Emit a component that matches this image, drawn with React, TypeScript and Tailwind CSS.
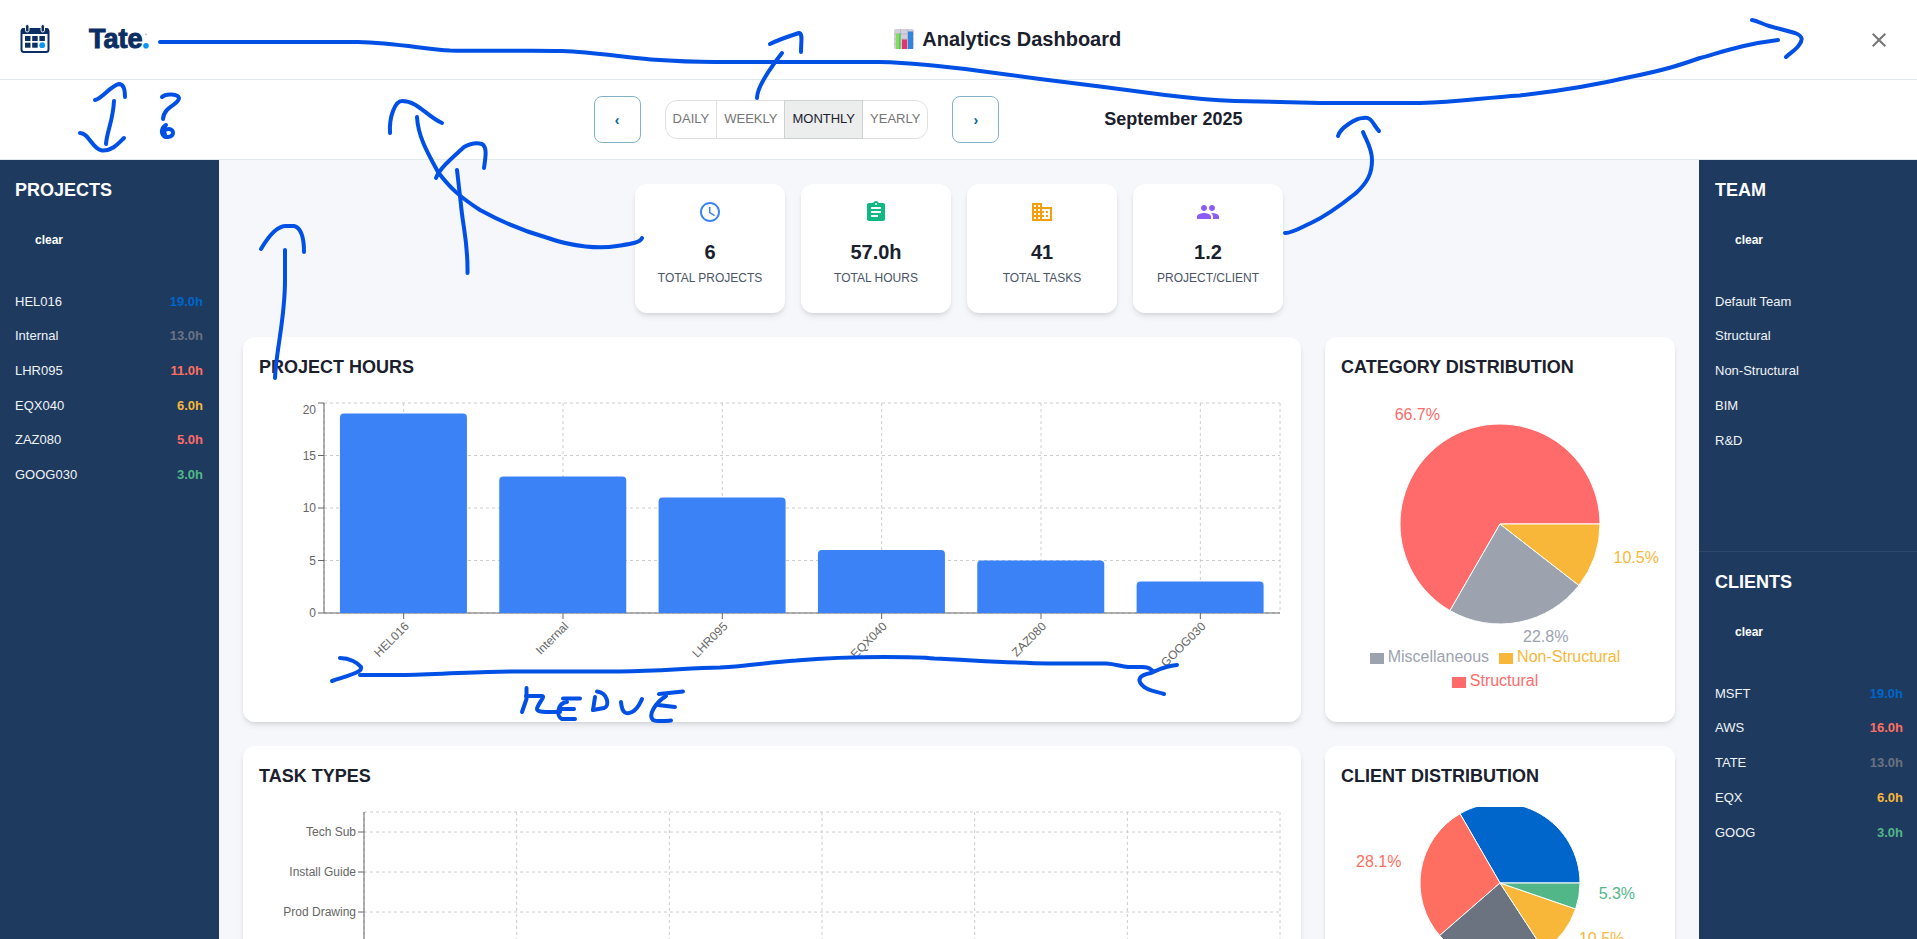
import React from "react";
import { MdAccessTime, MdAssignment, MdBusiness, MdClose, MdPeople } from "react-icons/md";

type Entry = { name: string; hours?: string; tone?: string };

const projects: Entry[] = [
  { name: "HEL016", hours: "19.0h", tone: "text-[#0066cc]" },
  { name: "Internal", hours: "13.0h", tone: "text-[#6b7280]" },
  { name: "LHR095", hours: "11.0h", tone: "text-[#ff6f61]" },
  { name: "EQX040", hours: "6.0h", tone: "text-[#f8b739]" },
  { name: "ZAZ080", hours: "5.0h", tone: "text-[#ff6b6b]" },
  { name: "GOOG030", hours: "3.0h", tone: "text-[#52b788]" },
];

const teams: Entry[] = [
  { name: "Default Team" },
  { name: "Structural" },
  { name: "Non-Structural" },
  { name: "BIM" },
  { name: "R&D" },
];

const clients: Entry[] = [
  { name: "MSFT", hours: "19.0h", tone: "text-[#0066cc]" },
  { name: "AWS", hours: "16.0h", tone: "text-[#ff6f61]" },
  { name: "TATE", hours: "13.0h", tone: "text-[#6b7280]" },
  { name: "EQX", hours: "6.0h", tone: "text-[#f8b739]" },
  { name: "GOOG", hours: "3.0h", tone: "text-[#52b788]" },
];

const stats = [
  { icon: MdAccessTime, tone: "text-[#3b82f6]", value: "6", label: "TOTAL PROJECTS" },
  { icon: MdAssignment, tone: "text-[#10b981]", value: "57.0h", label: "TOTAL HOURS" },
  { icon: MdBusiness, tone: "text-[#f59e0b]", value: "41", label: "TOTAL TASKS" },
  { icon: MdPeople, tone: "text-[#8b5cf6]", value: "1.2", label: "PROJECT/CLIENT" },
];

const projectHours = [
  { name: "HEL016", value: 19 },
  { name: "Internal", value: 13 },
  { name: "LHR095", value: 11 },
  { name: "EQX040", value: 6 },
  { name: "ZAZ080", value: 5 },
  { name: "GOOG030", value: 3 },
];

const periods = ["DAILY", "WEEKLY", "MONTHLY", "YEARLY"];

function CalendarIcon() {
  return (
    <svg width="30" height="30" viewBox="0 0 30 30" aria-hidden="true">
      <rect x="1.5" y="5" width="27" height="23" rx="2.5" fill="#fff" stroke="#0b2e63" strokeWidth="2" />
      <path d="M1 10V6.5A2.5 2.5 0 0 1 3.500 4H26.500A2.500 2.500 0 0 1 29 6.500V10Z" fill="#0b2e63" />
      <rect x="5.500" y="0.500" width="3.500" height="7.500" rx="1.700" fill="#0b2e63" stroke="#fff" strokeWidth="1" />
      <rect x="21" y="0.500" width="3.500" height="7.500" rx="1.700" fill="#0b2e63" stroke="#fff" strokeWidth="1" />
      <g fill="#0b2e63">
        <rect x="5" y="12" width="5.500" height="5" />
        <rect x="12.200" y="12" width="5.500" height="5" />
        <rect x="19.400" y="12" width="5.500" height="5" />
        <rect x="5" y="18.700" width="5.500" height="5" />
        <rect x="12.200" y="18.700" width="5.500" height="5" />
      </g>
      <circle cx="22.200" cy="21.200" r="2.900" fill="#0a96f5" />
    </svg>
  );
}

function TateLogo() {
  return (
    <div className="flex items-end text-[27px] leading-8 font-bold text-[#0b2e63]">
      <span className="[-webkit-text-stroke:1px]">Tate</span>
      <svg width="6" height="32" viewBox="0 0 6 32" aria-hidden="true">
        <circle cx="3" cy="11.500" r="1" fill="#b9c3d3" />
        <circle cx="3" cy="22.800" r="2.800" fill="#0a96f5" />
      </svg>
    </div>
  );
}

function ChartGlyph() {
  return (
    <svg width="20" height="20" viewBox="0 0 20 20" aria-hidden="true">
      <rect width="20" height="20" rx="1.500" fill="#d3cedb" />
      <path d="M0 5H20M0 10H20M0 15H20M6.500 0V20M13.500 0V20" stroke="#b5aec2" strokeWidth="0.800" />
      <rect x="2" y="4.500" width="4.500" height="15.500" fill="#86dc5a" />
      <rect x="5" y="4.500" width="1.500" height="15.500" fill="#5fc26a" />
      <rect x="8" y="10.500" width="5" height="9.500" fill="#e0356f" />
      <rect x="14" y="2.500" width="5" height="17.500" fill="#2f86dc" />
    </svg>
  );
}

function SideSection({ title, rows, gridClass, className }: { title: string; rows: Entry[]; gridClass: string; className: string }) {
  return (
    <section className={className}>
      <h2 className="text-lg leading-7 font-bold text-white">{title}</h2>
      <button type="button" className="mt-5 flex h-8 w-[68px] items-center justify-center text-xs font-bold text-white">
        clear
      </button>
      <ul className={gridClass}>
        {rows.map((row) => (
          <li key={row.name} className="flex items-center justify-between text-[13px] text-[#f1f4f8]">
            <span>{row.name}</span>
            {row.hours && <span className={`font-bold ${row.tone}`}>{row.hours}</span>}
          </li>
        ))}
      </ul>
    </section>
  );
}

function Card({ title, children }: { title: string; children: React.ReactNode }) {
  return (
    <section className="min-w-0 rounded-xl bg-white p-4 shadow-md">
      <h2 className="mb-4 text-lg leading-[29px] font-bold text-[#1a202c]">{title}</h2>
      {children}
    </section>
  );
}

function ProjectHoursChart() {
  const left = 65;
  const right = 1021;
  const top = 5;
  const bottom = 215;
  const band = (right - left) / projectHours.length;
  const yOf = (v: number) => bottom - ((bottom - top) * v) / 20;
  const centers = projectHours.map((_, i) => left + band * (i + 0.5));
  return (
    <svg viewBox="0 0 1026 308" className="block h-auto w-full" role="img" aria-label="Project hours">
      <g stroke="#ccc" strokeDasharray="3 3">
        {[0, 5, 10, 15, 20].map((v) => (
          <line key={v} x1={left} x2={right} y1={yOf(v)} y2={yOf(v)} />
        ))}
        {[left, ...centers, right].map((x) => (
          <line key={x} x1={x} x2={x} y1={top} y2={bottom} />
        ))}
      </g>
      <g stroke="#666">
        <line x1={left} x2={right} y1={bottom} y2={bottom} />
        <line x1={left} x2={left} y1={top} y2={bottom} />
        {[0, 5, 10, 15, 20].map((v) => (
          <line key={v} x1={left - 6} x2={left} y1={yOf(v)} y2={yOf(v)} />
        ))}
        {centers.map((x) => (
          <line key={x} x1={x} x2={x} y1={bottom} y2={bottom + 6} />
        ))}
      </g>
      {projectHours.map((d, i) => {
        const x = left + band * (i + 0.1);
        const w = Math.floor(band * 0.8);
        const y = yOf(d.value);
        return (
          <path
            key={d.name}
            fill="#3b82f6"
            d={`M${x},${bottom}V${y + 4}Q${x},${y} ${x + 4},${y}H${x + w - 4}Q${x + w},${y} ${x + w},${y + 4}V${bottom}Z`}
          />
        );
      })}
      <g fill="#666" fontSize="12" textAnchor="end">
        {[0, 5, 10, 15, 20].map((v) => (
          <text key={v} x={left - 8} y={Math.max(yOf(v), 12)} dy="0.355em">
            {v}
          </text>
        ))}
        {projectHours.map((d, i) => (
          <text key={d.name} x={centers[i]} y={bottom + 8} dy="0.71em" transform={`rotate(-45 ${centers[i]} ${bottom + 8})`}>
            {d.name}
          </text>
        ))}
      </g>
    </svg>
  );
}

function TaskTypesChart() {
  const left = 105;
  const right = 1021;
  const rows = ["Tech Sub", "Install Guide", "Prod Drawing"];
  return (
    <svg viewBox="0 0 1026 308" className="block h-auto w-full" role="img" aria-label="Task types">
      <g stroke="#ccc" strokeDasharray="3 3">
        {[5, 25, 65, 105, 145, 185].map((y) => (
          <line key={y} x1={left} x2={right} y1={y} y2={y} />
        ))}
        {[0, 1, 2, 3, 4, 5, 6].map((i) => {
          const x = left + ((right - left) / 6) * i;
          return <line key={i} x1={x} x2={x} y1={5} y2={205} />;
        })}
      </g>
      <g stroke="#666">
        <line x1={left} x2={left} y1={5} y2={205} />
        {rows.map((r, i) => (
          <line key={r} x1={left - 6} x2={left} y1={25 + 40 * i} y2={25 + 40 * i} />
        ))}
      </g>
      <g fill="#666" fontSize="12" textAnchor="end">
        {rows.map((r, i) => (
          <text key={r} x={left - 8} y={25 + 40 * i} dy="0.355em">
            {r}
          </text>
        ))}
      </g>
    </svg>
  );
}

type Slice = { value: number; color: string; label?: string };

function Pie({ slices, cy, radius, height, title }: { slices: Slice[]; cy: number; radius: number; height: number; title: string }) {
  const cx = 159;
  const total = slices.reduce((sum, s) => sum + s.value, 0);
  const point = (turn: number, r: number) => {
    const a = turn * Math.PI * 2;
    return [cx + r * Math.cos(a), cy - r * Math.sin(a)];
  };
  let run = 0;
  const arcs = slices.map((s) => {
    const from = run / total;
    run += s.value;
    const to = run / total;
    return { ...s, a: point(from, radius), b: point(to, radius), mid: (from + to) / 2, big: to - from > 0.5 ? 1 : 0 };
  });
  return (
    <svg viewBox={`0 0 318 ${height}`} className="block h-auto w-full overflow-hidden" role="img" aria-label={title}>
      {arcs.map((s) => (
        <path
          key={s.color}
          fill={s.color}
          stroke="#fff"
          d={`M${cx},${cy}L${s.a[0]},${s.a[1]}A${radius},${radius} 0 ${s.big} 0 ${s.b[0]},${s.b[1]}Z`}
        />
      ))}
      {arcs.map((s) => {
        if (!s.label) return null;
        const [x, y] = point(s.mid, radius + 20);
        return (
          <text key={s.color} x={x} y={y} fill={s.color} fontSize="16" textAnchor={x > cx ? "start" : "end"}>
            {s.label}
          </text>
        );
      })}
    </svg>
  );
}

function LegendItem({ name, text, fill }: { name: string; text: string; fill: string }) {
  return (
    <li className={`mr-2.5 flex items-center gap-1 ${text}`}>
      <span className={`mt-0.5 h-[11px] w-3.5 ${fill}`} />
      {name}
    </li>
  );
}

const inkStrokes = [
  // long arrow from the logo to the close button
  "M160,42H358C395,43 425,49 450,50.500C490,51.500 530,50 562,51C595,52 620,57 651,59.500C680,61.500 695,62 715,62H880C920,63 950,67 980,71L1040,79L1100,86.500L1165,95C1190,98 1210,100 1235,101L1320,103H1420C1460,102 1480,98 1520,95.500C1560,91 1600,84 1630,77C1665,70 1680,65 1700,58C1725,51 1745,44 1778,40",
  "M1752,20C1758,21 1762,24 1769,26L1795,33C1803,36 1803,40 1799,45C1796,50 1791,52 1786,57",
  // arrow from the period switch to the header
  "M757,98C757,89 768,71 782,53",
  "M770,44C780,39 790,36 799,33C803,34 801,40 801,52",
  // double-headed arrow and question mark
  "M95,100C102,99 110,86 119,84C124,84 125,90 125,97",
  "M114,101C113,121 107,131 106,144",
  "M80,133C89,133 92,149 102,150.500C112,151 118,144 124,138",
  "M162,97C166,93 178,94 179,98C179,105 164,106 163,119",
  "M166,125C159,130 162,138 168,137C175,136 174,129 169,129C165,129 163,131 165,134",
  // arrow from the first stat card
  "M390,133C389,117 395,101 402,101C418,101 426,116 442,123",
  "M417,117C418,136 427,152 438,172C450,188 460,197 480,210C500,221 523,231 548,238C573,247 600,249 617,246C630,244 640,243 642,238",
  "M436,178C440,168 452,158 464,147C471,143 476,142 482,144C487,147 486,155 484,168",
  "M457,170L461,205C463,228 468,241 467.500,273",
  // arrow from the first chart
  "M261,249C268,237 277,226 286,226H294C302,228 304,241 304,252",
  "M285,250V280C285,320 276,350 275,378",
  // arrow from the last stat card
  "M1285,233C1290,234 1300,228 1311,223C1330,214 1346,201 1356,193C1368,182 1372,173 1372,160C1372,148 1366,140 1363,132",
  "M1338,136C1340,128 1356,118 1363,118C1372,116 1373,125 1379,131",
  // reduce span below the bar chart
  "M360,675H405C450,674 490,671 520,671.500H620C660,671 690,668 720,667.500C750,666 770,662 796,660.500C825,658 855,657 884,657C905,657 920,657 934,658.500C970,660 1010,663 1049,663.500H1106C1115,664 1120,666 1128,667H1142C1150,667 1150,669 1153,671",
  "M340,658C350,658 358,663 361,667C363,672 350,675 332,681",
  "M1177,665C1165,666 1158,670 1151,673C1139,675 1137,680 1142,685C1147,691 1155,691 1164,694",
  "M526.500,688V699L522,712",
  "M526,696H542C546,696 537,705 537,709C537,713 550,712 560,712",
  "M563,698.500H580",
  "M567,702C557,703 556,717 562,719H575",
  "M559,709H574",
  "M595,697L593,710",
  "M597,691.500C608,693 610,706 604,708L593,710",
  "M621,702C622,713 626,715 632,712C638,709 640,703 642,699",
  "M659,694L683,691.500",
  "M666,696C655,703 648,715 653,720C657,722 665,721 671,720.500",
  "M658,705L675,707",
];

export default function App() {
  return (
    <div className="relative flex h-screen flex-col overflow-hidden bg-[#f5f7fb] font-['Liberation_Sans',Arial,sans-serif] text-[#1a202c]">
      <header className="flex h-20 shrink-0 items-center border-b border-[#e2e8f0] bg-white pr-[18px] pl-5">
        <div className="flex items-center gap-[39px] pr-2 pb-0.5">
          <CalendarIcon />
          <TateLogo />
        </div>
        <h1 className="flex flex-1 items-center justify-center gap-2 pb-0.5 text-xl font-bold">
          <ChartGlyph />
          Analytics Dashboard
        </h1>
        <button type="button" aria-label="Close" className="flex size-10 items-center justify-center text-[#757575]">
          <MdClose className="size-6" />
        </button>
      </header>

      <div className="flex h-20 shrink-0 items-center justify-center gap-6 border-b border-[#e2e8f0] bg-white">
        <button type="button" aria-label="Previous period" className="size-[47px] rounded-lg border border-[#7fb2c9] text-sm font-bold text-[#006494]">
          ‹
        </button>
        <div className="flex" role="group" aria-label="Period">
          {periods.map((p) => (
            <button
              key={p}
              type="button"
              aria-pressed={p === "MONTHLY"}
              className={`-ml-px h-[39px] border px-[7px] pb-0.5 text-[13px] first:ml-0 first:rounded-l-xl last:rounded-r-xl ${
                p === "MONTHLY" ? "z-10 border-[#cfd1d2] bg-[#eceeee] text-[#1a202c]" : "border-[#e0e0e0] text-[#757575]"
              }`}
            >
              {p}
            </button>
          ))}
        </div>
        <button type="button" aria-label="Next period" className="size-[47px] rounded-lg border border-[#7fb2c9] text-sm font-bold text-[#006494]">
          ›
        </button>
        <p className="w-[300px] pb-0.5 text-center text-lg font-bold">September 2025</p>
      </div>

      <div className="flex min-h-0 flex-1">
        <aside className="w-[219px] shrink-0 bg-[#1e3a5f]">
          <SideSection title="PROJECTS" rows={projects} gridClass="mt-7 grid h-52 grid-rows-6" className="pt-4 pr-4 pl-[15px]" />
        </aside>

        <main className="min-w-0 flex-1 overflow-hidden p-6">
          <div className="flex justify-center gap-4">
            {stats.map(({ icon: Icon, tone, value, label }) => (
              <div key={label} className="flex w-[150px] flex-col items-center rounded-xl bg-white pt-4 pb-[25px] shadow-md">
                <Icon className={`size-6 ${tone}`} />
                <p className="mt-3 text-xl leading-8 font-bold">{value}</p>
                <p className="text-xs leading-5 text-[#4a5568]">{label}</p>
              </div>
            ))}
          </div>

          <div className="mt-6 grid grid-cols-[minmax(0,1fr)_350px] gap-6">
            <Card title="PROJECT HOURS">
              <ProjectHoursChart />
            </Card>
            <Card title="CATEGORY DISTRIBUTION">
              <Pie
                title="Category distribution"
                cy={126}
                radius={100}
                height={247}
                slices={[
                  { value: 38, color: "#ff6b6b", label: "66.7%" },
                  { value: 13, color: "#9ca3af", label: "22.8%" },
                  { value: 6, color: "#f8b739", label: "10.5%" },
                ]}
              />
              <ul className="flex flex-wrap justify-center px-4 text-base leading-6">
                <LegendItem name="Miscellaneous" text="text-[#9ca3af]" fill="bg-[#9ca3af]" />
                <LegendItem name="Non-Structural" text="text-[#f8b739]" fill="bg-[#f8b739]" />
                <LegendItem name="Structural" text="text-[#ff6b6b]" fill="bg-[#ff6b6b]" />
              </ul>
            </Card>
            <Card title="TASK TYPES">
              <TaskTypesChart />
            </Card>
            <Card title="CLIENT DISTRIBUTION">
              <Pie
                title="Client distribution"
                cy={76}
                radius={80}
                height={308}
                slices={[
                  { value: 19, color: "#0066cc" },
                  { value: 16, color: "#ff6f61", label: "28.1%" },
                  { value: 13, color: "#6b7280" },
                  { value: 6, color: "#f8b739", label: "10.5%" },
                  { value: 3, color: "#52b788", label: "5.3%" },
                ]}
              />
            </Card>
          </div>
        </main>

        <aside className="w-[218px] shrink-0 bg-[#1e3a5f]">
          <SideSection title="TEAM" rows={teams} gridClass="mt-7 grid h-[174px] grid-rows-5" className="min-h-[392px] border-b border-[#2d4a6d] pt-4 pr-[14px] pl-4" />
          <SideSection title="CLIENTS" rows={clients} gridClass="mt-7 grid h-[174px] grid-rows-5" className="pt-4 pr-[14px] pl-4" />
        </aside>
      </div>

      <svg viewBox="0 0 1917 939" className="pointer-events-none absolute inset-0 z-20 size-full" aria-hidden="true">
        <g fill="none" stroke="#0050e6" strokeWidth="4" strokeLinecap="round" strokeLinejoin="round">
          {inkStrokes.map((d) => (
            <path key={d} d={d} />
          ))}
        </g>
      </svg>
    </div>
  );
}
